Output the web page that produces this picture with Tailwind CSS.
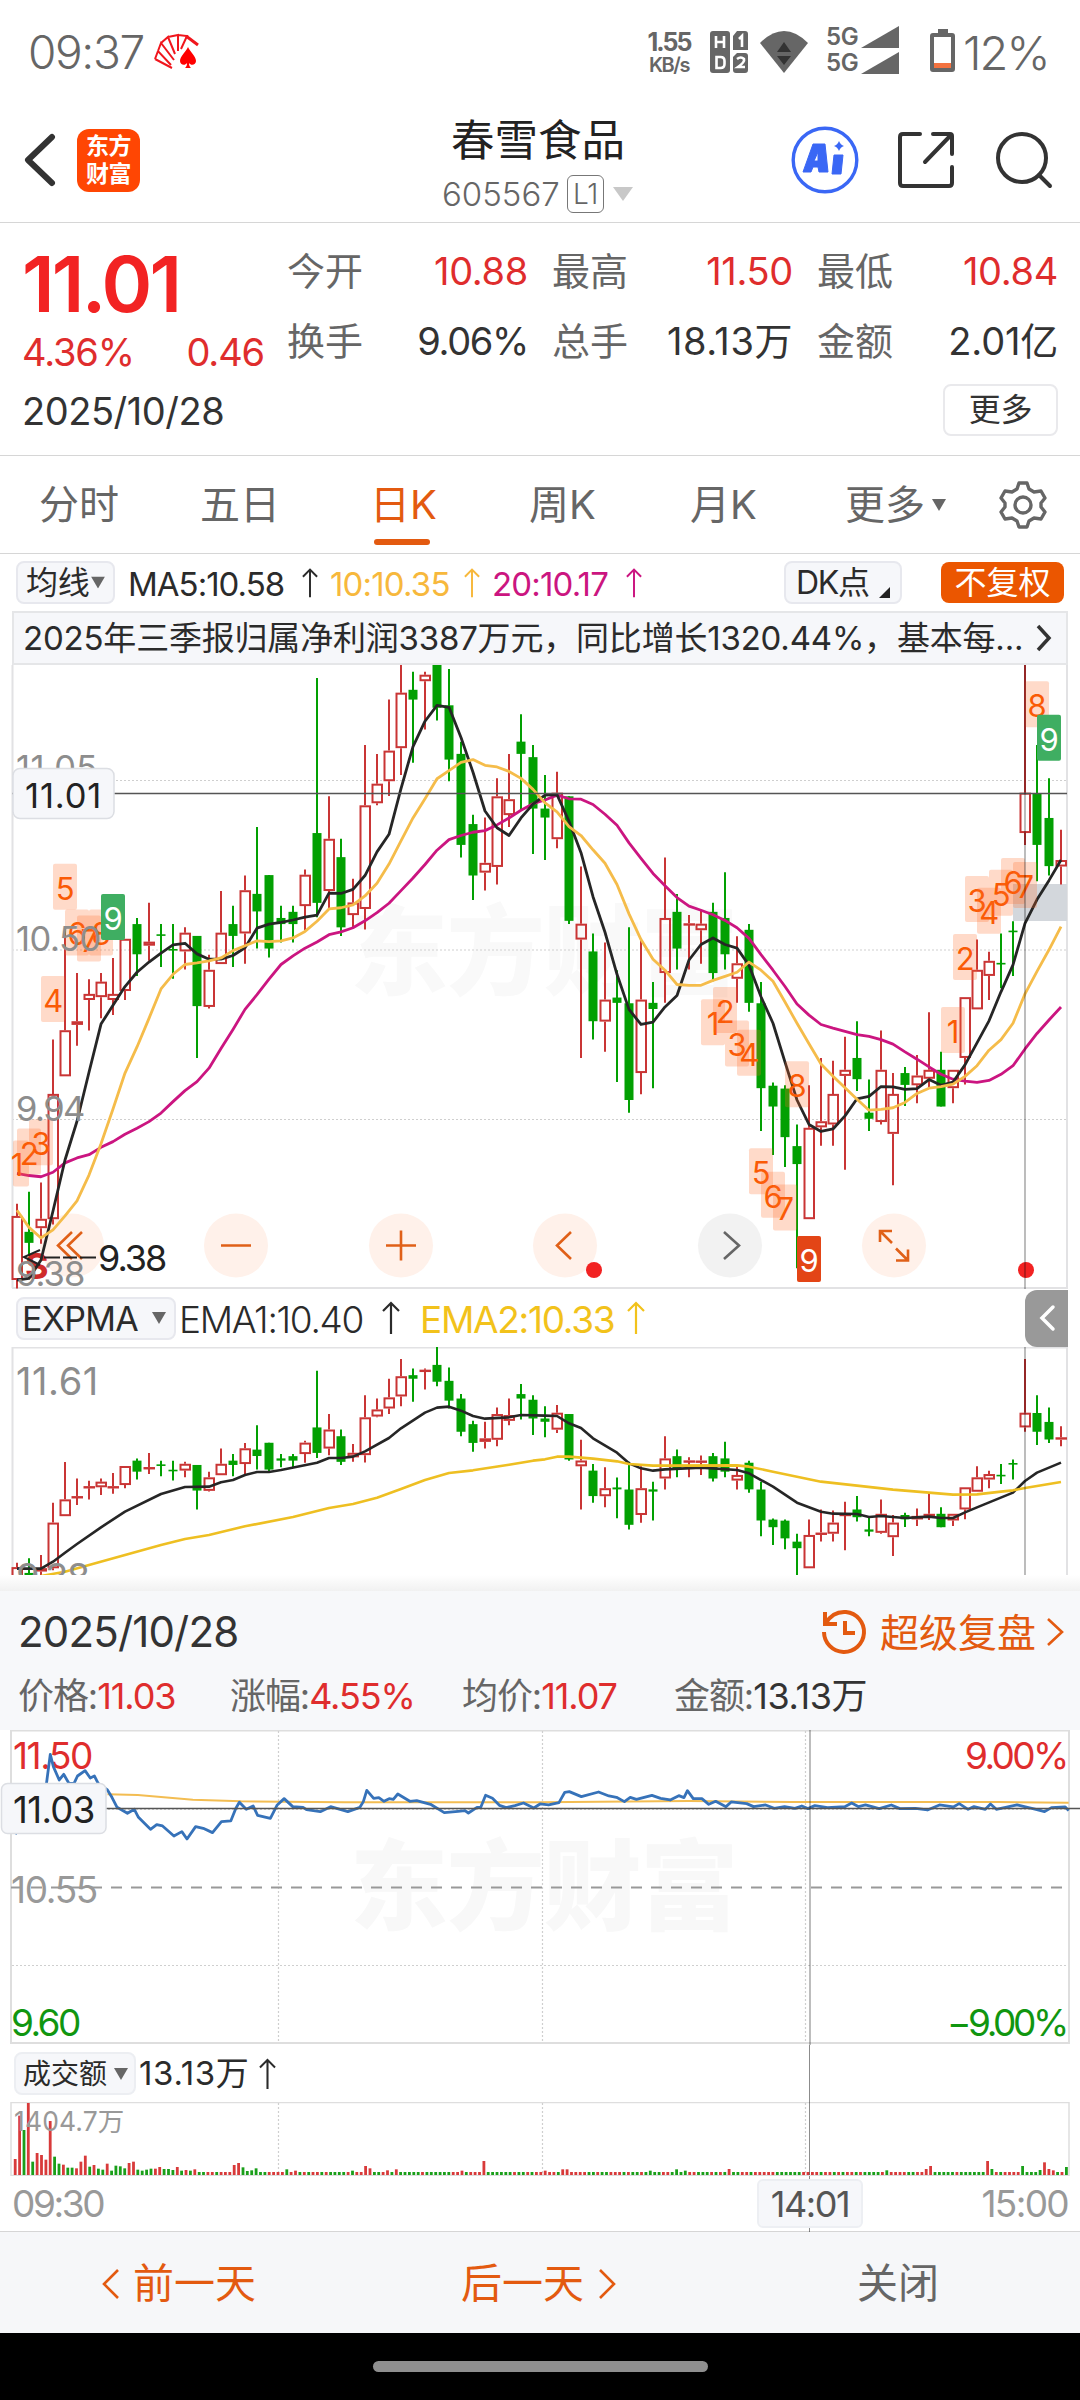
<!DOCTYPE html>
<html lang="zh-CN">

<head>
  <meta charset="UTF-8" />
  <meta name="viewport" content="width=device-width, initial-scale=1.0" />
  <script src="https://cdn.jsdelivr.net/npm/@tailwindcss/browser@4"></script>
  <title>春雪食品 605567</title>
</head>

<body class="bg-white w-[1080px] h-[2400px] overflow-hidden font-['Inter','Noto_Sans_CJK_SC',sans-serif] text-[#333] leading-none whitespace-nowrap tracking-[-0.02em]">
  <svg class="hidden">
    <symbol id="up" viewBox="0 0 18 34">
      <path d="M9 33V2M1 10l8-8 8 8" fill="none" stroke="currentColor" stroke-width="2.2" />
    </symbol>
    <symbol id="down" viewBox="0 0 14 12">
      <path d="M0 0h14L7 12z" fill="currentColor" />
    </symbol>
  </svg>

  <!-- status bar -->
  <div class="h-[104px] flex items-center pl-7 pr-[27px] text-[#666]">
    <span class="text-[46px] font-light w-[126px] tracking-[-0.03em]">09:37</span>
    <svg class="w-[47px] h-[38px]" viewBox="0 0 47 38" fill="none" stroke="#f0161d" stroke-width="2">
      <path d="M1 26l17 9M1 26l3-8 13 14M4 18l3-8 13 17M7 10l7-6 7 17M14 4l10-2 0 16M24 2l9 1-6 13" />
      <path d="M32 3l12 9" stroke-width="3" />
      <path d="M34 14c2 5 8 9 8 14 0 4-5 5-7 2 0 3 1 4 2 5h-6c1-1 2-2 2-5-2 3-7 2-7-2 0-5 6-9 8-14z" fill="#f00" stroke="none" />
    </svg>
    <div class="ml-auto flex items-center">
      <div class="flex flex-col items-center font-bold w-[44px]">
        <span class="text-[25px] tracking-[-0.08em]">1.55</span>
        <span class="text-[20px] tracking-[-0.07em] font-semibold">KB/s</span>
      </div>
      <svg class="w-[38px] h-[42px] ml-[19px]" viewBox="0 0 38 42">
        <rect x="0" y="0" width="20" height="42" rx="3" fill="#666" />
        <path d="M27 0h8a3 3 0 0 1 3 3v16H23V5zM27 22h8a3 3 0 0 1 3 3v14a3 3 0 0 1-3 3H26a3 3 0 0 1-3-3V26z" fill="#666" />
        <path d="M6 5v12M14 5v12M6 11h8M6.500 26h4q4 0 4 4v3q0 4-4 4h-4zM29 8l3-3v11M27 28q4-3 7 0 1 3-6 8h7" fill="none" stroke="#fff" stroke-width="2.600" />
      </svg>
      <svg class="w-[48px] h-[42px] ml-[12px]" viewBox="0 0 48 42">
        <path d="M0 12Q24-12 48 12L24 42z" fill="#666" />
        <path d="M24 11l7 10H17zM17 25h14l-7 9z" fill="#333" />
      </svg>
      <div class="ml-[18px] flex flex-col text-[24px] font-semibold gap-[3px] -mt-1">
        <div class="flex items-center h-[23px] gap-1"><span class="w-[31px]">5G</span><svg class="w-[38px] h-[22px]" viewBox="0 0 38 22"><path d="M38 0v22H0z" fill="#666" /></svg></div>
        <div class="flex items-center h-[23px] gap-1"><span class="w-[31px]">5G</span><svg class="w-[38px] h-[22px]" viewBox="0 0 38 22"><path d="M38 0v22H0z" fill="#666" /></svg></div>
      </div>
      <svg class="w-[25px] h-[43px] ml-[31px] -mt-1" viewBox="0 0 25 43">
        <path d="M8 0h10v4h4a3 3 0 0 1 3 3v33a3 3 0 0 1-3 3H3a3 3 0 0 1-3-3V7a3 3 0 0 1 3-3h5z" fill="#666" />
        <path d="M4 8h17v31H4z" fill="#fff" />
        <path d="M4 34h17v5H4z" fill="#f47340" />
      </svg>
      <span class="ml-[8px] w-[90px] text-[47px] font-light tracking-[-0.04em]">12%</span>
    </div>
  </div>

  <!-- header -->
  <header class="h-[119px] border-b border-[#d6d6d6] flex items-center justify-between pl-[24px] pr-[27px] relative pb-2 pt-0.5">
    <div class="flex items-center">
      <svg class="w-[32px] h-[54px]" viewBox="0 0 32 54"><path d="M28 4L4 27l24 23" fill="none" stroke="#333" stroke-width="6" stroke-linecap="round" stroke-linejoin="round" /></svg>
      <div class="ml-[21px] size-[63px] rounded-xl bg-[#ff4603] text-white text-[23px] font-bold flex flex-col items-center justify-center gap-[5px] tracking-[-0.02em]">
        <span>东方</span><span>财富</span>
      </div>
    </div>
    <div class="absolute left-[442px] top-[15px] flex flex-col">
      <h1 class="text-[43.5px] text-[#222] pl-[9px] tracking-normal">春雪食品</h1>
      <div class="flex items-center mt-[13px] text-[#666] h-[37px]">
        <span class="w-[125px] text-[33px] font-light tracking-normal">605567</span>
        <span class="w-[37px] h-[38px] rounded-md border border-[#777] text-[28px] font-light flex items-center justify-center">L1</span>
        <svg class="w-5 h-[14px] ml-[9px] text-[#c8c8c8]" preserveAspectRatio="none" viewBox="0 0 14 12"><use href="#down" /></svg>
      </div>
    </div>
    <div class="flex items-center">
      <svg class="size-[68px]" viewBox="0 0 68 68">
        <circle cx="34" cy="34" r="31.800" fill="none" stroke="#3a67f5" stroke-width="3.400" />
        <path d="M22 18h12l3 28h-9l-1-5h-5l-2 5h-8zM27 26l-4 9h4zM43 29h9l-2 19h-9z" fill="#3a67f5" fill-rule="evenodd" stroke="#3a67f5" stroke-width="1" stroke-linejoin="round" />
        <path d="M48 15q1.500 4 5 5-3.500 1-5 5-1.500-4-5-5 3.500-1 5-5z" fill="#3a67f5" />
      </svg>
      <svg class="w-[56px] h-[56px] ml-[39px]" viewBox="0 0 56 56" fill="none" stroke="#333" stroke-width="4" stroke-linecap="round" stroke-linejoin="round">
        <path d="M22 2H5Q2 2 2 5v46q0 3 3 3h46q3 0 3-3V35M35 2h17q2 0 2 2v18M53 3L27 30" />
      </svg>
      <svg class="w-[58px] h-[60px] ml-[41px]" viewBox="0 0 58 60" fill="none" stroke="#333" stroke-width="4" stroke-linecap="round">
        <circle cx="27" cy="28" r="24" /><path d="M44 45l11 11" />
      </svg>
    </div>
  </header>

  <!-- quote -->
  <section class="h-[233px] border-b border-[#d6d6d6] flex pl-[22px] pr-[22px]">
    <div class="w-[265px] pt-[23px]">
      <div class="h-[72px] text-[77px] font-semibold text-[#f22323] tracking-[-0.035em]">11.01</div>
      <div class="flex justify-between w-[242px] mt-[15px] text-[38px] text-[#df2d2d] h-[38px] tracking-[-0.03em]">
        <span>4.36%</span><span>0.46</span>
      </div>
      <div class="mt-[21px] text-[38px] tracking-[-0.012em]">2025/10/28</div>
    </div>
    <div class="w-[771px] pt-[28px] flex flex-col items-end">
      <div class="grid grid-cols-3 gap-x-6 w-full text-[38px]">
        <div class="flex justify-between h-[40px] items-center"><span class="text-[#666] tracking-normal">今开</span><span class="text-[#df2d2d]">10.88</span></div>
        <div class="flex justify-between h-[40px] items-center"><span class="text-[#666] tracking-normal">最高</span><span class="text-[#df2d2d]">11.50</span></div>
        <div class="flex justify-between h-[40px] items-center"><span class="text-[#666] tracking-normal">最低</span><span class="text-[#df2d2d]">10.84</span></div>
        <div class="flex justify-between h-[40px] items-center mt-[30px]"><span class="text-[#666] tracking-normal">换手</span><span class="tracking-[-0.035em]">9.06%</span></div>
        <div class="flex justify-between h-[40px] items-center mt-[30px]"><span class="text-[#666] tracking-normal">总手</span><span class="tracking-[0.015em]">18.13万</span></div>
        <div class="flex justify-between h-[40px] items-center mt-[30px]"><span class="text-[#666] tracking-normal">金额</span><span class="tracking-[-0.005em]">2.01亿</span></div>
      </div>
      <button class="mt-[23px] w-[115px] h-[52px] rounded-lg border-2 border-[#e9e9ec] text-[32px] flex items-center justify-center">更多</button>
    </div>
  </section>

  <!-- period tabs -->
  <nav class="h-[98px] border-b border-[#d6d6d6] flex items-center text-[40px] text-[#666] pl-[39px] tracking-normal">
    <span class="w-[161px]">分时</span>
    <span class="w-[170px]">五日</span>
    <div class="w-[159px] relative text-[#e35a10]">日K<div class="absolute left-[4px] -bottom-[20px] w-[56px] h-1.5 rounded-full bg-[#e35a10]"></div></div>
    <span class="w-[161px]">周K</span>
    <span class="w-[155px]">月K</span>
    <span class="w-[87px]">更多</span>
    <svg class="w-3.5 h-3" viewBox="0 0 14 12"><use href="#down" /></svg>
    <svg class="w-[50px] h-[50px] ml-[52px]" viewBox="0 0 50 50" fill="none" stroke="#666" stroke-width="3.400" stroke-linejoin="round">
      <path d="M21 3h8l2 6 5 3 7-1 4 7-4 5v4l4 5-4 7-7-1-5 3-2 6h-8l-2-6-5-3-7 1-4-7 4-5v-4l-4-5 4-7 7 1 5-3z" /><circle cx="25" cy="25" r="8" />
    </svg>
  </nav>

  <!-- moving averages -->
  <div class="h-[57px] flex items-center pl-[16px] text-[33px] text-[#2b2b2b]">
    <div class="w-[99px] h-[43px] rounded-lg border-2 border-[#e7e8ee] bg-[#f6f7fa] flex items-center pl-2 text-[32px]">均线<svg class="w-3.5 h-[13px] text-[#666] ml-0.5" viewBox="0 0 14 12"><use href="#down" /></svg></div>
    <span class="ml-[13px] w-[174px] pt-1 tracking-[-0.03em]">MA5:10.58</span><svg class="w-4 h-8"><use href="#up" /></svg>
    <span class="ml-[12px] w-[134px] pt-1 text-[#f7b83c] tracking-[-0.025em]">10:10.35</span><svg class="w-4 h-8 text-[#f7b83c]"><use href="#up" /></svg>
    <span class="ml-[12px] w-[134px] pt-1 text-[#cb1580] tracking-[-0.025em]">20:10.17</span><svg class="w-4 h-8 text-[#cb1580]"><use href="#up" /></svg>
    <div class="ml-[142px] w-[118px] h-[43px] rounded-lg border-2 border-[#e7e8ee] bg-[#f6f7fa] flex items-center pl-[10px] text-[32px] tracking-[-0.04em]">DK点<svg class="w-[11px] h-[11px] ml-[10px] mt-5" viewBox="0 0 11 11"><path d="M11 0v11H0z" fill="#222" /></svg></div>
    <div class="ml-[39px] w-[123px] h-[41px] rounded-lg bg-[#eb5600] text-white text-[32px] flex items-center justify-center tracking-normal">不复权</div>
  </div>

  <!-- news line -->
  <div class="h-[54px] mx-[12px] border-2 border-[#e5e6e8] bg-[#f6f7fa] flex items-center text-[33px] text-[#2b2b2b] pl-[9px]">
    <span class="w-[1001px] tracking-[-0.006em]">2025年三季报归属净利润3387万元，同比增长1320.44%，基本每...</span>
    <svg class="w-4 h-7 ml-[12px]" viewBox="0 0 16 28"><path d="M2 2l11 12L2 26" fill="none" stroke="#333" stroke-width="3.500" /></svg>
  </div>

  <!-- daily candles -->
  <svg id="daily" class="block w-[1080px] h-[624px] overflow-hidden" viewBox="0 665 1080 624">
    <text x="350" y="987" font-size="98" font-weight="900" fill="#f9f9f9" textLength="388">东方财富</text>
    <path d="M12 780.500H1067M12 950H1067M12 1119.500H1067" stroke="#cfcfcf" stroke-width="1.200" stroke-dasharray="2 2" />
    <path d="M12.500 665V1288M1067 665V1288M12 1288H1068" stroke="#e2e2e4" stroke-width="2" fill="none" />
    <g fill="#fff1ea">
      <circle cx="72" cy="1245.500" r="32" /><circle cx="236" cy="1245.500" r="32" /><circle cx="401" cy="1245.500" r="32" /><circle cx="565" cy="1245.500" r="32" /><circle cx="894" cy="1245.500" r="32" />
    </g>
    <circle cx="730" cy="1245.500" r="32" fill="#f2f2f2" />
    <g fill="none" stroke="#e06018" stroke-width="2.600">
      <path d="M72 1232l-14 13.500 14 13.500M82 1232l-14 13.500 14 13.500M221 1245.500h30M386 1245.500h30M401 1230.500v30M571 1232l-14 13.500 14 13.500" />
      <path d="M892 1231h-12v11M880 1231l12 12M896 1260.500h12v-11M908 1260.500l-12-12" />
    </g>
    <path d="M724 1232l15 13.500-15 13.500" fill="none" stroke="#666" stroke-width="2.600" />
    <path d="M1013 884h54v37h-54z" fill="#d3d7dc" />
    <g id="dailyBars"></g>
    <text x="25" y="1279" font-size="36" font-weight="700" fill="#cf2b2b" textLength="16">S</text>
    <g id="dailyLines" fill="none" stroke-width="2.800" stroke-linejoin="round"></g>
    <path d="M40 1250l-16 7 16 8M44 1257.500h16M63 1257.500h14M80 1257.500h16" fill="none" stroke="#222" stroke-width="2" />
    <text x="98" y="1271" font-size="36" fill="#222" textLength="69">9.38</text>
    <g id="counts" text-anchor="middle"></g>
    <g font-size="34.500" fill="#8d8d8d">
      <text x="16" y="780" textLength="81">11.05</text><text x="16" y="951" textLength="85">10.50</text><text x="16" y="1121" textLength="69">9.94</text><text x="16" y="1286" textLength="69">9.38</text>
    </g>
    <circle cx="594" cy="1270" r="8" fill="#f22222" /><circle cx="1026" cy="1270" r="8" fill="#f22222" />
    <path d="M12 793.500H1067" stroke="#555" stroke-width="1.300" />
    <path d="M1025 665V1289" stroke="#000" stroke-opacity=".33" stroke-width="1.600" />
    <rect x="13" y="768.500" width="101" height="50" rx="7" fill="#f6f7fa" stroke="#dcdee3" stroke-width="1.500" />
    <text x="25" y="808" font-size="34.500" fill="#222" textLength="76">11.01</text>
  </svg>

  <!-- EXPMA -->
  <div class="h-[58px] flex items-center pl-[16px] pr-[12px] text-[37px] text-[#2b2b2b]">
    <div class="w-[160px] h-[43px] rounded-lg border-2 border-[#e7e8ee] bg-[#f6f7fa] flex items-center pl-1 text-[34px]"><span class="w-[130px] pt-0.5 tracking-[-0.02em]">EXPMA</span><svg class="w-3.5 h-3 text-[#666]" viewBox="0 0 14 12"><use href="#down" /></svg></div>
    <span class="ml-[3px] w-[203px] pt-0.5 tracking-[-0.035em] font-light">EMA1:10.40</span><svg class="w-[18px] h-[34px]"><use href="#up" /></svg>
    <span class="ml-[20px] w-[207px] pt-0.5 text-[#f2c21b] tracking-[-0.035em]">EMA2:10.33</span><svg class="w-[18px] h-[34px] text-[#f2c21b]"><use href="#up" /></svg>
    <div class="ml-auto w-[43px] h-[57px] bg-[#999] rounded-l-xl flex items-center justify-center"><svg class="w-5 h-7" viewBox="0 0 20 28"><path d="M16 3L5 14l11 11" fill="none" stroke="#fff" stroke-width="3.500" stroke-linecap="round" /></svg></div>
  </div>
  <svg class="block w-[1080px] h-[228px] overflow-hidden" viewBox="0 1347 1080 228">
    <path d="M12.500 1575V1347.500H1067V1575" fill="none" stroke="#e2e2e4" stroke-width="2" />
    <g id="emaBars"></g>
    <g id="emaLines" fill="none" stroke-width="2.600" stroke-linejoin="round"></g>
    <text x="16" y="1395" font-size="38" fill="#8d8d8d" textLength="82">11.61</text>
    <text x="16" y="1591" font-size="38" fill="#8d8d8d" textLength="74">9.38</text>
    <path d="M1025 1347V1575" stroke="#000" stroke-opacity=".33" stroke-width="1.600" />
  </svg>
  <div class="h-[16px] bg-linear-to-b from-white to-[#f1f1f1]"></div>

  <!-- replay panel -->
  <section class="h-[139px] bg-[#f7f8fa] pl-[18px] pr-[16px]">
    <div class="flex items-center justify-between h-[82px] text-[42px]">
      <span class="tracking-[-0.02em]">2025/10/28</span>
      <div class="flex items-center text-[#e35a10]">
        <svg class="w-[46px] h-[48px]" viewBox="0 0 46 48" fill="none" stroke="#e35a10" stroke-width="4"><path d="M4 4v12h12M5 15Q12 3 25 4a20 20 0 1 1-22 20M24 13v12h10" /></svg>
        <span class="ml-[13px] text-[39px] tracking-normal">超级复盘</span>
        <svg class="w-[17px] h-[28px] ml-[11px]" viewBox="0 0 17 28"><path d="M1 1l14 13L1 27" fill="none" stroke="#e35a10" stroke-width="2.600" /></svg>
      </div>
    </div>
    <div class="flex items-center h-[46px] text-[36px] tracking-[-0.03em]">
      <div class="w-[212px]"><span class="text-[#666]">价格:</span><span class="text-[#df2d2d]">11.03</span></div>
      <div class="w-[232px]"><span class="text-[#666]">涨幅:</span><span class="text-[#df2d2d]">4.55%</span></div>
      <div class="w-[212px]"><span class="text-[#666]">均价:</span><span class="text-[#df2d2d]">11.07</span></div>
      <div><span class="text-[#666]">金额:</span><span class="tracking-[-0.01em]">13.13万</span></div>
    </div>
  </section>

  <!-- intraday -->
  <svg class="block w-[1080px] h-[315px]" viewBox="0 1730 1080 315">
    <text x="350" y="1922" font-size="98" font-weight="900" fill="#f8f8f8" textLength="388">东方财富</text>
    <path d="M11 1730.500H1069V2043H11z" fill="none" stroke="#dedede" stroke-width="2" />
    <path d="M278.500 1731V2042M542.500 1731V2042M805.500 1731V2042M12 1965.500H1068M12 1809.500H1068" stroke="#cfcfcf" stroke-width="1.200" stroke-dasharray="2 2" />
    <path d="M11 1887.500H1068" stroke="#999" stroke-width="2.200" stroke-dasharray="11 9" />
    <g font-size="37">
      <text x="13" y="1769" fill="#df2d2d" textLength="80">11.50</text>
      <text x="1069" y="1769" fill="#df2d2d" text-anchor="end" textLength="104">9.00%</text>
      <text x="11" y="1903" fill="#999" textLength="87">10.55</text>
      <text x="11" y="2036" fill="#109610" textLength="70">9.60</text>
      <text x="1069" y="2036" fill="#109610" text-anchor="end" textLength="122">−9.00%</text>
    </g>
    <g transform="translate(0 1580) scale(.3444 .3333)" fill="none">
      <path d="M312 643L400 645L560 659L700 664L1000 667L1568 667L2000 663L2300 666L2900 666L3103 668" stroke="#f3bd52" stroke-width="2" vector-effect="non-scaling-stroke" />
      <polyline vector-effect="non-scaling-stroke" stroke="#3672b9" stroke-width="2.800" stroke-linejoin="round" points="44,762 100,700 135,610 146,523 155,560 172,600 185,583 200,610 215,610 225,588 247,572 262,594 274,588 285,610 312,630 325,652 340,682 370,700 390,688 402,712 437,748 455,734 472,738 505,768 528,755 543,777 568,740 590,745 617,758 643,725 670,723 685,685 695,667 715,688 735,678 748,706 785,715 805,675 825,656 850,680 880,682 890,689 930,695 960,680 1010,695 1045,682 1055,665 1065,631 1085,655 1100,653 1115,664 1130,656 1142,658 1155,642 1190,664 1210,662 1250,673 1290,698 1330,694 1350,692 1360,699 1385,682 1396,682 1410,646 1430,655 1450,676 1470,683 1495,677 1520,669 1550,684 1568,672 1593,675 1623,668 1640,637 1653,635 1688,650 1738,636 1768,648 1790,652 1813,665 1830,652 1848,658 1893,646 1918,655 1946,660 1971,647 1986,653 1996,632 2013,656 2038,656 2058,673 2078,664 2108,680 2123,666 2168,671 2188,680 2223,675 2248,685 2278,680 2308,685 2328,678 2346,686 2366,677 2403,683 2453,680 2473,669 2493,680 2513,675 2553,686 2588,675 2613,686 2658,685 2693,690 2728,675 2768,681 2785,671 2811,688 2828,680 2861,688 2876,672 2893,688 2953,675 3008,688 3033,695 3053,683 3093,681 3103,692" />
    </g>
    <path d="M106 1808.500H1080" stroke="#555" stroke-width="1.300" />
    <path d="M810 1730V2045" stroke="#000" stroke-opacity=".33" stroke-width="1.600" />
    <rect x="1.500" y="1783.500" width="104.500" height="50" rx="6" fill="#f6f7fa" stroke="#dcdee3" stroke-width="1.500" />
    <text x="13" y="1823" font-size="36.500" fill="#222" textLength="82">11.03</text>
  </svg>

  <!-- turnover -->
  <div class="h-[57px] flex items-center pl-[14px] text-[#2b2b2b] relative">
    <div class="w-[122px] h-[43px] rounded-lg border-2 border-[#eceef2] bg-[#f6f7fa] flex items-center pl-[7px] text-[28px]"><span class="w-[91px] tracking-normal">成交额</span><svg class="w-3.5 h-3 text-[#666]" viewBox="0 0 14 12"><use href="#down" /></svg></div>
    <span class="ml-[3px] w-[120px] text-[33px] tracking-[0.02em]">13.13万</span><svg class="w-[17px] h-[32px]"><use href="#up" /></svg>
    <div class="absolute left-[809px] top-0 w-px h-[130px] bg-black/45"></div>
  </div>
  <svg class="block w-[1080px] h-[74px]" viewBox="0 2102 1080 74">
    <path d="M11 2102.500H1069V2175.500H11z" fill="none" stroke="#dedede" stroke-width="1.500" />
    <path d="M278.500 2103V2175M542.500 2103V2175M805.500 2103V2175" stroke="#cfcfcf" stroke-width="1.200" stroke-dasharray="2 2" />
    <g id="volume"></g>
    <text x="14" y="2131" font-size="26.500" fill="#999" textLength="110">1404.7万</text>
  </svg>
  <div class="h-[56px] flex items-center justify-between px-[12px] text-[37px] text-[#999] border-b border-[#d6d6d6] relative">
    <span class="tracking-[-0.065em]">09:30</span><span class="tracking-[-0.045em]">15:00</span>
    <div class="absolute left-[809px] top-0 w-px h-[56px] bg-black/45"></div>
    <div class="absolute left-[757px] top-[3px] w-[106px] h-[49px] rounded-md border-2 border-[#edeff3] bg-[#f6f7fa] text-[#555] text-[36px] flex items-center justify-center tracking-[-0.04em]">14:01</div>
  </div>

  <!-- bottom bar -->
  <div class="h-[101px] bg-[#f6f7f9] flex items-center text-[41px] text-[#e35a10] pl-[101px] tracking-normal pt-0.5">
    <svg class="w-[19px] h-[30px]" viewBox="0 0 19 30"><path d="M17 1L3 15l14 14" fill="none" stroke="currentColor" stroke-width="2.600" /></svg>
    <span class="ml-[13px] w-[328px]">前一天</span>
    <span>后一天</span>
    <svg class="w-[19px] h-[30px] ml-[14px]" viewBox="0 0 19 30"><path d="M2 1l14 14L2 29" fill="none" stroke="currentColor" stroke-width="2.600" /></svg>
    <span class="ml-[240px] text-[#666]">关闭</span>
  </div>
  <div class="h-[67px] bg-black flex items-center justify-center"><div class="w-[335px] h-[11px] rounded-full bg-[#8f8f8f]"></div></div>

  <script>
    // direction, high, body top, body bottom, low (offsets from the top of the scale)
    const candles = [
      ['r',1332,1362,1519,1540],['g',1303,1401,1428,1460],['r',1280,1369,1392,1430],['r',930,1063,1370,1383],['r',656,907,1020,1020],
      ['r',767,885,894,945],['r',782,818,833,908],['r',767,788,826,878],['r',730,818,833,870],['r',683,683,811,833],
      ['g',632,647,721,774],['r',595,690,700,737],['g',647,672,674,752],['g',647,708,712,781],['r',655,668,714,758],
      ['g',676,676,848,975],['r',722,759,850,854],['r',566,668,745,745],['g',602,647,676,752],['r',528,564,670,744],
      ['g',409,573,616,707],['g',527,527,707,729],['g',602,632,647,692],['g',602,617,647,692],['r',513,526,603,662],
      ['g',44,424,595,630],['r',334,438,566,610],['g',438,483,655,676],['r',536,594,625,655],['r',208,356,610,660],
      ['r',230,303,351,356],['r',97,222,297,333],['r',-35,80,216,282],['g',29,73,97,252],['r',29,36,52,170],
      ['g',-118,4,117,148],['g',22,111,244,297],['g',200,230,453,484],['g',379,402,528,588],['r',386,497,521,565],
      ['r',290,334,507,550],['r',230,341,380,409],['g',133,200,230,370],['g',208,238,364,475],['g',282,364,386,490],
      ['r',274,325,439,461],['g',334,334,639,647],['r',506,646,685,975],['g',670,714,885,930],['r',692,832,886,960],
      ['g',760,827,840,1034],['g',655,841,1078,1109],['r',685,832,1012,1064],['g',789,840,855,1049],['r',484,632,767,840],
      ['g',573,617,707,758],['r',625,645,649,758],['r',612,646,662,744],['g',595,617,767,787],['g',520,632,721,758],
      ['r',677,743,781,840],['g',647,661,840,862],['g',789,841,1049,1154],['g',1035,1043,1094,1213],['g',1042,1050,1169,1242],
      ['g',1138,1191,1235,1490],['r',1042,1146,1370,1370],['r',975,1130,1145,1190],['r',982,1063,1138,1190],['r',923,1004,1019,1249],
      ['g',885,975,1027,1056],['g',1028,1109,1124,1154],['r',908,1004,1132,1138],['r',1012,1063,1161,1287],['g',997,1012,1041,1093],
      ['r',968,1018,1042,1086],['r',863,1004,1026,1046],['g',960,1004,1094,1094],['r',1004,1004,1049,1086],['r',826,826,975,1040],
      ['r',685,759,856,856],['r',715,737,774,833],['g',670,742,746,804],['g',640,663,667,774],['r',-35,325,424,453],
      ['g',208,327,453,542],['g',290,387,505,528],['r',416,490,506,550]
    ];
    const ma5 = [1519,1515,1470,1350,1225,1130,1010,892,846,800,765,740,718,698,694,720,733,733,724,705,657,647,643,637,630,625,571,572,562,528,470,427,315,212,150,111,116,190,275,370,411,430,387,353,331,330,395,472,580,667,770,856,893,887,850,822,735,697,681,697,706,748,825,890,985,1078,1138,1155,1149,1117,1075,1069,1045,1046,1052,1050,1028,1042,1034,992,938,884,813,747,645,587,540,490];
    const ma10 = [1348,1390,1416,1396,1362,1325,1262,1185,1100,1012,948,878,806,770,746,742,737,730,712,700,688,690,688,681,665,640,610,607,600,578,547,500,443,387,340,291,271,251,244,258,262,273,290,317,350,372,408,430,465,498,550,622,685,733,760,795,797,797,785,775,765,740,760,787,838,890,940,990,1020,1048,1076,1103,1101,1097,1084,1062,1049,1045,1039,1020,994,956,930,890,818,763,710,653];
    const ma20 = [1258,1263,1266,1255,1232,1220,1212,1194,1180,1162,1147,1131,1110,1082,1055,1033,1000,952,905,856,820,782,746,725,706,691,673,666,656,639,619,596,565,534,501,466,440,430,422,418,404,387,368,352,343,331,340,341,354,378,405,448,486,523,553,582,603,613,624,638,656,682,722,760,800,843,870,893,902,910,918,922,930,941,960,978,997,1015,1027,1032,1035,1030,1015,994,953,915,882,850];
    // index, offset
    const ema1 = [[0,836],[2,836],[3,815],[4,788],[5,762],[7,712],[9,665],[12,612],[14,591],[16,590],[17,577],[18,570],[19,555],[20,546],[21,546],[22,540],[25,518],[26,504],[27,504],[28,500],[29,484],[31,444],[32,415],[34,368],[35,353],[36,350],[37,362],[38,378],[39,386],[41,382],[42,375],[44,377],[45,378],[46,400],[47,414],[48,445],[50,488],[51,520],[52,535],[53,542],[54,538],[57,533],[60,540],[61,550],[63,590],[65,638],[67,665],[68,671],[70,672],[71,681],[72,678],[74,684],[76,680],[77,684],[78,684],[79,667],[80,652],[83,608],[84,573],[85,548],[87,518]];
    const ema2 = [[2,858],[4,845],[6,825],[9,795],[12,765],[14,747],[16,735],[19,709],[23,681],[26,654],[28,642],[30,623],[32,597],[34,570],[36,549],[38,541],[41,524],[43,512],[44,508],[45,500],[46,500],[48,506],[50,514],[51,522],[53,527],[60,526],[61,530],[63,545],[67,575],[70,587],[73,599],[76,608],[78,614],[80,613],[82,605],[83,601],[84,594],[87,576]];

    const RED = '#c93535', GREEN = '#02a002';
    const xAt = i => 17 + 12 * i;
    const dailyY = v => 660 + v / 2.45;
    const emaY = v => 1364.3 + v * 0.1489;

    function drawCandles(id, yAt) {
      let content = '';
      candles.forEach(([dir, high, top, bottom, low], i) => {
        const x = xAt(i), h = yAt(high), t = yAt(top), b = yAt(bottom), l = yAt(low);
        if (dir === 'g') {
          content += `<path d="M${x} ${h}V${l}" stroke="${GREEN}" stroke-width="2"/><rect x="${x - 4.5}" y="${t}" width="9" height="${Math.max(b - t, 1.6)}" fill="${GREEN}"/>`;
        } else {
          const bh = Math.max(b - t - 2, 0.4);
          content += `<path d="M${x} ${h}V${t}M${x} ${b}V${l}" stroke="${RED}" stroke-width="2"/><rect x="${x - 4.5}" y="${t + 1}" width="9.5" height="${bh}" fill="none" stroke="${RED}" stroke-width="2"/>`;
        }
      });
      document.getElementById(id).innerHTML = content;
    }
    drawCandles('dailyBars', dailyY);
    drawCandles('emaBars', emaY);

    const line = (points, color) => `<polyline points="${points.join(' ')}" stroke="${color}"/>`;
    document.getElementById('dailyLines').innerHTML =
      line(ma20.map((v, i) => [xAt(i), dailyY(v)]), '#cb1580') +
      line(ma5.map((v, i) => [xAt(i), dailyY(v)]), '#262626') +
      line(ma10.map((v, i) => [xAt(i), dailyY(v)]), '#f5bc4a');
    document.getElementById('emaLines').innerHTML =
      line(ema1.map(([i, v]) => [xAt(i), 1290 + v / 3]), '#262626') +
      line(ema2.map(([i, v]) => [xAt(i), 1290 + v / 3]), '#eebf22');

    // nine-count marks: first candle, tops, colour of the 9
    const runs = [
      [0, [1177,1148,1125,774,499,611,626,611,573], '#3fae62'],
      [58, [831,801,883,906,1196,1254,1285,983,1411], '#e34516'],
      [78, [850,671,529,558,514,485,495,52,134], '#3fae62']
    ];
    let marks = '';
    for (const [start, tops, last] of runs) {
      tops.forEach((top, n) => {
        const x = xAt(start + n), y = dailyY(top), nine = n === 8;
        const left = Math.max(x - 12, 13);
        marks += `<rect x="${left}" y="${y}" width="${x + 12 - left}" height="46" rx="2" fill="${nine ? last : '#ff6a26'}" fill-opacity="${nine ? 1 : 0.25}"/>`;
        marks += `<text x="${x}" y="${y + 36}" font-size="31" fill="${nine ? '#fff' : '#fa5a05'}">${n + 1}</text>`;
      });
    }
    document.getElementById('counts').innerHTML = marks;

    const volumes = [48,178,135,216,40,66,60,46,162,55,34,31,22,22,20,40,58,25,30,19,16,34,13,28,26,20,36,40,16,13,16,19,19,24,18,18,15,24,13,15,13,17];
    const peaks = {50:30,51:36,52:23,53:12,54:14,55:20,62:17,64:13,77:13,80:27,81:20,85:14,87:17,102:13,107:42,121:13,125:17,126:17,145:13,151:17,153:13,163:18,199:14,208:18,209:27,222:42,223:18,230:27,234:15,235:38,236:18,237:14,240:24};
    const tint = 'rrgrgrrrrggrggrrrgrggrggggrrggggrrgggrgrgrggrrgrrrrrggggggrrrrgrrgrgrrgrggggrgrrrrggrrgrgggggrggggggrrrgrrrrggggggrggrgrrr';
    let bars = '';
    for (let i = 0; i < 241; i++) {
      const height = (volumes[i] || peaks[i] || 9) / 3;
      let up = tint[i % tint.length] === 'r';
      if ([107, 125, 126, 163, 208, 209, 222, 235, 236, 237].includes(i)) up = true;
      if ([223, 230, 234, 240].includes(i)) up = false;
      bars += `<rect x="${(13.8 + i * 4.38).toFixed(1)}" y="${2175 - height}" width="2.8" height="${height}" fill="${up ? '#d83a3a' : '#1a9f1a'}"/>`;
    }
    document.getElementById('volume').innerHTML = bars;
  </script>
</body>
</html>
